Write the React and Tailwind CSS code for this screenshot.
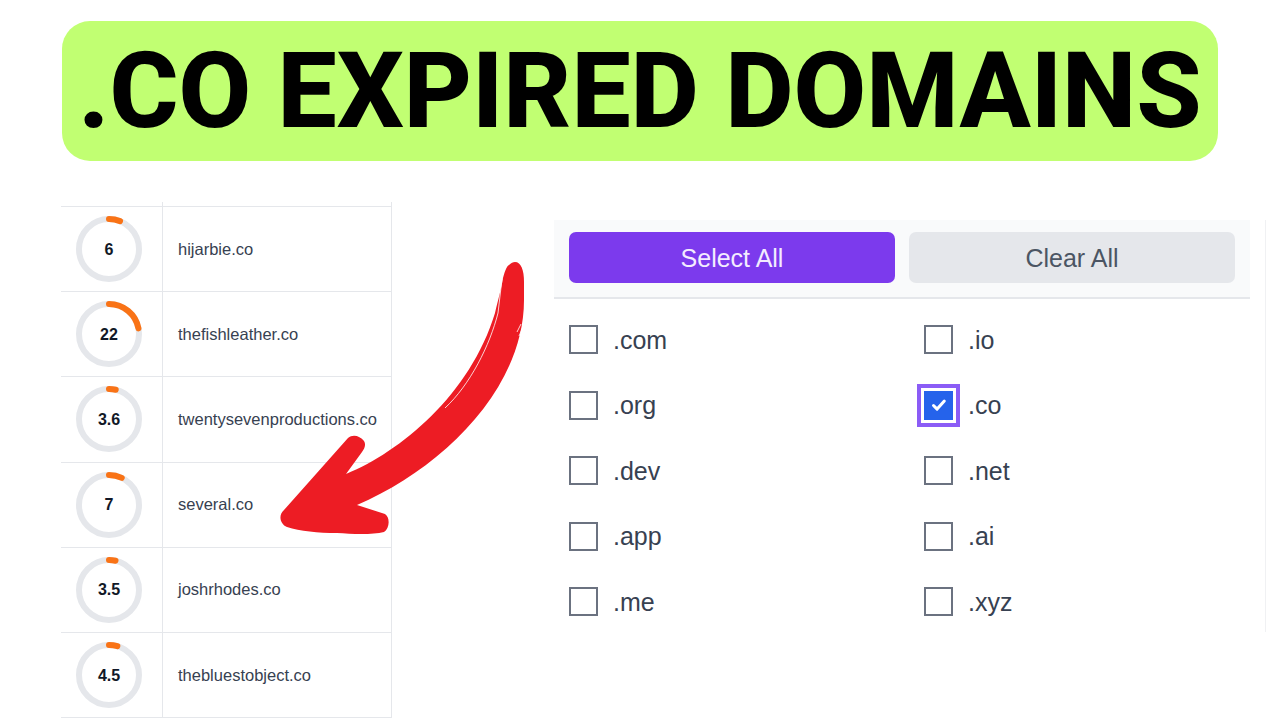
const rows = [
  { score: '6', pct: 6, domain: 'hijarbie.co' },
  { score: '22', pct: 22, domain: 'thefishleather.co' },
  { score: '3.6', pct: 3.6, domain: 'twentysevenproductions.co' },
  { score: '7', pct: 7, domain: 'several.co' },
  { score: '3.5', pct: 3.5, domain: 'joshrhodes.co' },
  { score: '4.5', pct: 4.5, domain: 'thebluestobject.co' },
];

const tlds = [
  ['.com', '.io'],
  ['.org', '.co'],
  ['.dev', '.net'],
  ['.app', '.ai'],
  ['.me', '.xyz'],
];

function ScoreRing({ score, pct }) {
  return (
    <div className="relative w-[66px] h-[66px]">
      <svg width="66" height="66" viewBox="0 0 66 66" className="-rotate-90">
        <circle cx="33" cy="33" r="30" fill="none" stroke="#e5e7eb" strokeWidth="6" />
        <circle
          cx="33"
          cy="33"
          r="30"
          fill="none"
          stroke="#f97316"
          strokeWidth="6"
          strokeLinecap="round"
          pathLength="100"
          strokeDasharray={`${pct} 100`}
        />
      </svg>
      <span className="absolute inset-0 pt-[1px] flex items-center justify-center text-base font-bold text-[#111827]">
        {score}
      </span>
    </div>
  );
}

function Checkbox({ label }) {
  const checked = label === '.co';
  return (
    <div className="flex items-center h-[29px] gap-[15px]">
      {checked ? (
        <span className="w-[29px] h-[29px] relative">
          <span className="absolute -inset-[7px] border-[4px] border-[#8b5cf6]" />
          <span className="absolute inset-0 bg-[#2563eb] flex items-center justify-center">
            <svg width="20" height="20" viewBox="0 0 20 20" fill="none">
              <path d="M4.5 10.5l3.6 3.6 7.2-8" stroke="#fff" strokeWidth="3" strokeLinecap="round" strokeLinejoin="round" />
            </svg>
          </span>
        </span>
      ) : (
        <span className="w-[29px] h-[29px] border-2 border-[#6b7280] bg-white" />
      )}
      <span className="text-[25px] pt-[2px] text-[#374151]">{label}</span>
    </div>
  );
}

export default function App() {
  return (
    <div className="relative w-[1280px] h-[720px] overflow-hidden bg-white font-['Liberation_Sans',sans-serif]">
      <div className="ml-[62px] mt-[21px] w-[1156px] h-[140px] pt-[2px] rounded-[28px] bg-[#c1ff72] flex items-center justify-center">
        <h1 className="font-['Roboto',sans-serif] font-extrabold text-[105.4px] leading-none text-black whitespace-nowrap">
          .CO EXPIRED DOMAINS
        </h1>
      </div>

      <div className="flex mt-[41px]">
        <div className="ml-[61px] w-[331px] border-r border-[#e5e7eb] shrink-0">
          <div className="h-[4px] ml-[101px] border-l border-[#e5e7eb]" />
          <div className="border-t border-[#e5e7eb]">
            {rows.map((row) => (
              <div key={row.domain} className="flex h-[85.2px] border-b border-[#e5e7eb]">
                <div className="w-[101px] flex items-center pl-[15px]">
                  <ScoreRing score={row.score} pct={row.pct} />
                </div>
                <div className="flex-1 border-l border-[#e5e7eb] pl-[15px] flex items-center text-[16.5px] text-[#374151]">
                  {row.domain}
                </div>
              </div>
            ))}
          </div>
        </div>

        <div className="ml-[162px] mt-[18px] w-[712px] h-[412px] border-r border-[#f0f1f3]">
          <div className="w-[696px] h-[79px] bg-[#f9fafb] border-b-2 border-[#e5e7eb] px-[15px] pt-[12px] flex gap-[14px]">
            <button className="w-[326px] h-[51px] pt-[2px] rounded-[7px] bg-[#7c3aed] text-[25px] text-[#f3ecff]">Select All</button>
            <button className="w-[326px] h-[51px] pt-[2px] rounded-[7px] bg-[#e5e7eb] text-[25px] text-[#4b5563]">Clear All</button>
          </div>
          <div className="pl-[15px] pt-[26px] flex flex-col gap-[36.5px]">
            {tlds.map(([a, b]) => (
              <div key={a} className="grid grid-cols-[355px_1fr]">
                <Checkbox label={a} />
                <Checkbox label={b} />
              </div>
            ))}
          </div>
        </div>
      </div>

      {/* brush arrow */}
      <svg className="absolute left-0 top-0" width="1280" height="720" viewBox="0 0 1280 720" fill="none">
        <path
          fill="#ed1c24"
          d="M515 262C521 262 524 270 524 282L524 300C524 390 440 470 357 505L385 514C390 517 390 528 384 532C372 535 352 534 337 533C318 533 300 531 287 527C280 524 278 515 284 510L348 438C353 434 360 436 364 441C366 444 365 448 362 452L346 474C400 452 470 395 495 313C498 300 501 290 503 278C505 270 507 266 509 265C511 263 513 262 515 262Z"
        />
        <path d="M502 279L498 313C490 345 470 385 445 408" stroke="#fff" strokeWidth="0.8" />
        <path d="M517 332L521 324M519 336L523 327" stroke="#fff" strokeWidth="0.8" />
      </svg>
    </div>
  );
}
